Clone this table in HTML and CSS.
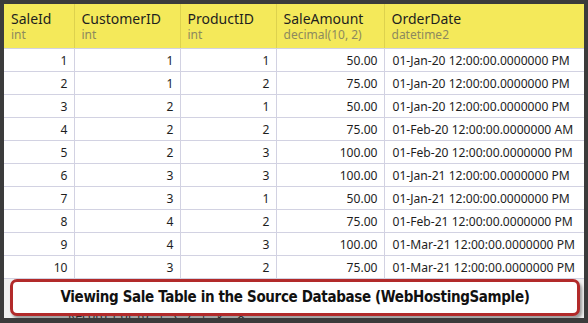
FILE: index.html
```html
<!DOCTYPE html>
<html lang="en">
<head>
    <meta charset="UTF-8">
    <title>Sale Table</title>
    <link rel="stylesheet" href="styles.css">
</head>
<body>
    <div class="window">
        <table class="grid">
            <colgroup>
                <col class="c-id">
                <col class="c-cust">
                <col class="c-prod">
                <col class="c-amt">
                <col class="c-date">
            </colgroup>
            <thead>
                <tr>
                    <th><span class="col-name">SaleId</span><span class="col-type">int</span></th>
                    <th><span class="col-name">CustomerID</span><span class="col-type">int</span></th>
                    <th><span class="col-name">ProductID</span><span class="col-type">int</span></th>
                    <th><span class="col-name">SaleAmount</span><span class="col-type">decimal(10, 2)</span></th>
                    <th><span class="col-name">OrderDate</span><span class="col-type">datetime2</span></th>
                </tr>
            </thead>
            <tbody>
                <tr><td class="num">1</td><td class="num">1</td><td class="num">1</td><td class="num">50.00</td><td>01-Jan-20 12:00:00.0000000 PM</td></tr>
                <tr><td class="num">2</td><td class="num">1</td><td class="num">2</td><td class="num">75.00</td><td>01-Jan-20 12:00:00.0000000 PM</td></tr>
                <tr><td class="num">3</td><td class="num">2</td><td class="num">1</td><td class="num">50.00</td><td>01-Jan-20 12:00:00.0000000 PM</td></tr>
                <tr><td class="num">4</td><td class="num">2</td><td class="num">2</td><td class="num">75.00</td><td>01-Feb-20 12:00:00.0000000 AM</td></tr>
                <tr><td class="num">5</td><td class="num">2</td><td class="num">3</td><td class="num">100.00</td><td>01-Feb-20 12:00:00.0000000 PM</td></tr>
                <tr><td class="num">6</td><td class="num">3</td><td class="num">3</td><td class="num">100.00</td><td>01-Jan-21 12:00:00.0000000 PM</td></tr>
                <tr><td class="num">7</td><td class="num">3</td><td class="num">1</td><td class="num">50.00</td><td>01-Jan-21 12:00:00.0000000 PM</td></tr>
                <tr><td class="num">8</td><td class="num">4</td><td class="num">2</td><td class="num">75.00</td><td>01-Feb-21 12:00:00.0000000 PM</td></tr>
                <tr><td class="num">9</td><td class="num">4</td><td class="num">3</td><td class="num">100.00</td><td>01-Mar-21 12:00:00.0000000 PM</td></tr>
                <tr><td class="num">10</td><td class="num">3</td><td class="num">2</td><td class="num">75.00</td><td>01-Mar-21 12:00:00.0000000 PM</td></tr>
            </tbody>
        </table>
        <div class="status-bar">Record 1 of 10 &nbsp; | &nbsp; &lsaquo; &nbsp; &rsaquo; &nbsp; | &nbsp; &#10003; &nbsp; &#10005;</div>
        <div class="caption">Viewing Sale Table in the Source Database (WebHostingSample)</div>
    </div>
</body>
</html>
```

FILE: styles.css
```css
:root {
    --frame: #3b3b3b;
    --header-bg: #f4e95a;
    --header-line: #ddd24e;
    --grid-line: #d2d2e2;
    --text: #1e1e1e;
    --type-text: #8d8a5e;
    --caption-red: #b22a2a;
}
body {
    margin: 0;
    background-color: var(--frame);
    font-family: "Noto Sans", "Open Sans", sans-serif;
    color: var(--text);
}
.window {
    position: relative;
    width: 580px;
    height: 314px;
    margin: 4px 4px 0 4px;
    background-color: #f0f0f0;
    overflow: hidden;
}
.grid {
    border-collapse: collapse;
    table-layout: fixed;
    width: 580px;
    font-size: 12.1px;
    background-color: #ffffff;
}
.c-id { width: 70px; }
.c-cust { width: 106px; }
.c-prod { width: 96px; }
.c-amt { width: 108px; }
.c-date { width: 200px; }
.grid th {
    background-color: var(--header-bg);
    border-left: 1px solid var(--header-line);
    border-bottom: 1px solid var(--grid-line);
    height: 44px;
    padding: 0 7px;
    text-align: left;
    font-weight: normal;
    vertical-align: middle;
}
.grid th:first-child {
    border-left: none;
}
.col-name {
    display: block;
    font-size: 14px;
    line-height: 18px;
}
.col-type {
    display: block;
    font-size: 12px;
    line-height: 14px;
    color: var(--type-text);
}
.grid td {
    height: 22px;
    padding: 0 7px 0 8px;
    border-left: 1px solid var(--grid-line);
    border-bottom: 1px solid var(--grid-line);
    white-space: nowrap;
}
.grid td:first-child {
    border-left: none;
}
.grid td.num {
    text-align: right;
    padding-right: 6px;
}
.status-bar {
    margin-top: 30px;
    padding-left: 64px;
    font-size: 12px;
    line-height: 14px;
    color: #444444;
    white-space: nowrap;
}
.caption {
    position: absolute;
    left: 6px;
    top: 275px;
    width: 564px;
    height: 31px;
    border: 3px solid var(--caption-red);
    border-radius: 7px;
    background-color: #ffffff;
    box-shadow: 2px 3px 3px rgba(0, 0, 0, 0.35);
    font-family: "DejaVu Sans Condensed", "DejaVu Sans", sans-serif;
    font-weight: bold;
    font-stretch: condensed;
    font-size: 15px;
    letter-spacing: -0.35px;
    line-height: 31px;
    text-align: center;
    color: #111111;
}
```
